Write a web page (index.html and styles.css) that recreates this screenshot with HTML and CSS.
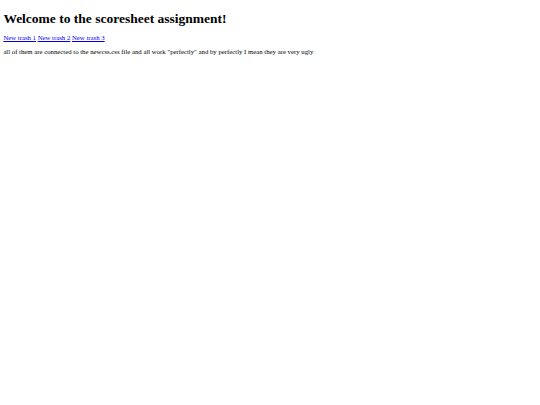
FILE: index.html
```html
<!DOCTYPE html>
<html>
<head>
<meta charset="utf-8">
<title>Scoresheet</title>
<link rel="stylesheet" href="styles.css">
</head>
<body>
<h1 class="title">Welcome to the scoresheet assignment!</h1>
<p class="links"><a href="#">New trash 1</a> <a href="#">New trash 2</a> <a href="#">New trash 3</a></p>
<p class="note">all of them are connected to the newcss.css file and all work "perfectly" and by perfectly I mean they are very ugly</p>
</body>
</html>
```
FILE: styles.css
```css
body {
  margin: 3.375px;
  font-family: "Liberation Serif", serif;
  font-size: 6.75px;
  color: #000;
  background: #fff;
}
.title {
  font-size: 13.5px;
  font-weight: bold;
  margin: 7.3px 0 7.8px;
}
.links, .note {
  margin: 6.75px 0;
}
a {
  color: #0000ee;
}
```
